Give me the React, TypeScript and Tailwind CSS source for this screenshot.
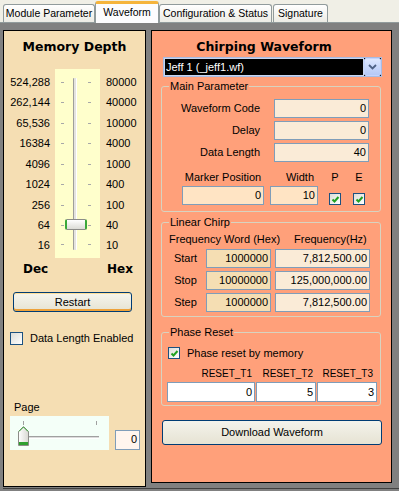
import React from 'react';

const depths: [string, string][] = [
  ['524,288', '80000'],
  ['262,144', '40000'],
  ['65,536', '10000'],
  ['16384', '4000'],
  ['4096', '1000'],
  ['1024', '400'],
  ['256', '100'],
  ['64', '40'],
  ['16', '10'],
];

const chirpRows = [
  { name: 'Start', hex: '1000000', hz: '7,812,500.00' },
  { name: 'Stop', hex: '10000000', hz: '125,000,000.00' },
  { name: 'Step', hex: '1000000', hz: '7,812,500.00' },
];

const Check = ({ checked, size }: { checked?: boolean; size: string }) => (
  <span className={`flex shrink-0 items-center justify-center border border-[#1c5180] bg-linear-to-br from-[#dcdcd7] to-white ${size}`}>
    {checked && (
      <svg width="9" height="9" viewBox="0 0 9 9">
        <path d="M1.5 4.5 L3.5 6.5 L7.5 2" fill="none" stroke="#21a121" strokeWidth="2" />
      </svg>
    )}
  </span>
);

const TextBox = ({ value, className }: { value: string; className: string }) => (
  <div className={`flex shrink-0 items-center justify-end border border-[#7f9db9] pr-[2px] ${className}`}>{value}</div>
);

const Group = ({ legend, className, children }: { legend: string; className: string; children: React.ReactNode }) => (
  <div className={`relative rounded-[3px] border border-[#d8d3c0] ${className}`}>
    <span className="absolute -top-[8px] left-[7px] bg-[#ffa07a] px-[1px] leading-[14px]">{legend}</span>
    {children}
  </div>
);

const App: React.FC = () => {
  return (
    <div className="flex h-[491px] w-[399px] flex-col bg-[#f0efe6] font-['Liberation_Sans',Arial,sans-serif] text-[11px] text-black">
      {/* tab strip */}
      <div className="flex h-[22px] items-end whitespace-nowrap pl-[3px] text-[10.5px]">
        <div className="flex h-[18px] w-[92px] items-center justify-center rounded-t-[3px] border border-b-0 border-[#919b9c] bg-linear-to-b from-white to-[#ecebe4]">
          Module Parameter
        </div>
        <div className="relative z-10 -mb-px flex h-[22px] w-[64px] items-center justify-center rounded-t-[3px] border border-b-0 border-[#919b9c] border-t-[3px] border-t-[#f5b43c] bg-[#fcfcfe] pb-[2px]">
          Waveform
        </div>
        <div className="flex h-[18px] w-[113px] items-center justify-center rounded-t-[3px] border border-b-0 border-[#919b9c] bg-linear-to-b from-white to-[#ecebe4]">
          Configuration &amp; Status
        </div>
        <div className="ml-[1px] flex h-[18px] w-[55px] items-center justify-center rounded-t-[3px] border border-b-0 border-[#919b9c] bg-linear-to-b from-white to-[#ecebe4]">
          Signature
        </div>
      </div>
      <div className="h-px bg-[#919b9c]" />

      {/* page */}
      <div className="flex flex-1 flex-col bg-[#808080] pl-[3px] pt-[7px]">
        <div className="flex items-start gap-[5px]">
          {/* Memory depth panel */}
          <div className="flex h-[457px] w-[143px] flex-col border border-black bg-[#f5deb3]">
            <div className="mt-[8px] text-center font-['DejaVu_Sans',sans-serif] text-[12.5px] font-bold leading-[16px]">
              Memory Depth
            </div>
            <div className="mt-[14px] flex h-[189px]">
              <div className="w-[51px] pr-[5px] pt-[2.75px] text-right">
                {depths.map(([dec], i) => (
                  <div key={dec} className={`flex items-center justify-end ${i < 8 ? 'h-[20.5px]' : 'h-[18px]'}`}>
                    {dec}
                  </div>
                ))}
              </div>
              <div className="relative w-[45px] bg-[#ffffcc] pt-[2.75px]">
                {depths.map(([dec], i) => (
                  <div key={dec} className={`flex items-center pl-[6px] ${i < 8 ? 'h-[20.5px]' : 'h-[18px]'}`}>
                    <span className="h-px w-[3px] bg-[#a8a8a8]" />
                    <span className="ml-[24px] h-px w-[3px] bg-[#a8a8a8]" />
                  </div>
                ))}
                <div className="absolute left-[18px] top-[9px] h-[172px] w-[4px] rounded-[1px] border-l border-l-[#a09f9a] border-r border-r-white bg-[#e4e3de]" />
                <div className="absolute left-[10px] top-[150px] h-[11px] w-[22px] rounded-[2px] border border-[#8c8c88] border-x-[2px] border-x-[#3aa83a] bg-linear-to-b from-white to-[#dcdcd6]" />
              </div>
              <div className="pl-[6px] pt-[2.75px]">
                {depths.map(([dec, hex], i) => (
                  <div key={dec} className={`flex items-center ${i < 8 ? 'h-[20.5px]' : 'h-[18px]'}`}>
                    {hex}
                  </div>
                ))}
              </div>
            </div>
            <div className="mt-[3px] flex h-[16px] items-center justify-between pl-[19px] pr-[12px] font-['DejaVu_Sans',sans-serif] text-[12px] font-bold">
              <span>Dec</span>
              <span>Hex</span>
            </div>
            <button className="ml-[9px] mt-[15px] flex h-[20px] w-[119px] items-center justify-center rounded-[3px] border border-[#003c74] bg-linear-to-b from-[#f6f5ee] to-[#e6e3d2] shadow-[inset_0_-2px_0_#eea23a,inset_0_1px_0_#ffdf9a]">
              Restart
            </button>
            <div className="ml-[6px] mt-[18px] flex items-center gap-[7px]">
              <Check size="h-[13px] w-[13px]" />
              <span>Data Length Enabled</span>
            </div>
            <div className="ml-[10px] mt-[53px] leading-[14px]">Page</div>
            <div className="ml-[6px] mt-[2px] flex items-end gap-[6px]">
              <div className="relative h-[34px] w-[99px] bg-[#f4fff8]">
                <span className="absolute left-[13px] top-[5px] h-[4px] w-px bg-[#a0a0a0]" />
                <span className="absolute left-[86px] top-[5px] h-[4px] w-px bg-[#a0a0a0]" />
                <span className="absolute left-[18px] top-[20px] h-[3px] w-[71px] border-t border-t-[#a0a0a0] border-b border-b-white bg-[#dcdcdc]" />
                <svg className="absolute left-[8px] top-[10px]" width="11" height="20" viewBox="0 0 11 20">
                  <defs>
                    <linearGradient id="pg" x1="0" y1="0" x2="1" y2="0">
                      <stop offset="0" stopColor="#ffffff" />
                      <stop offset="1" stopColor="#d8d8d2" />
                    </linearGradient>
                  </defs>
                  <polygon points="0.5,5.5 5.5,0.5 10.5,5.5 10.5,19.5 0.5,19.5" fill="url(#pg)" stroke="#8c8c88" />
                  <rect x="1" y="16" width="9" height="3" fill="#2fa02f" />
                  <path d="M1 5.5 L5.5 1 L10 5.5" fill="none" stroke="#3aa83a" />
                </svg>
              </div>
              <TextBox value="0" className="h-[20px] w-[25px] bg-[#fff5ee]" />
            </div>
          </div>

          {/* Chirping waveform panel */}
          <div className="flex h-[453px] w-[241px] flex-col border border-black bg-[#ffa07a]">
            <div className="mt-[8px] pr-[15px] text-center font-['DejaVu_Sans',sans-serif] text-[12.5px] font-bold leading-[16px]">
              Chirping Waveform
            </div>
            <div className="ml-[11px] mt-[2px] flex h-[20px] w-[219px] border border-[#a7bbe3] bg-black">
              <div className="flex flex-1 items-center border border-[#c8d6f0] pl-[1px] text-white">Jeff 1 (_jeff1.wf)</div>
              <div className="flex w-[17px] items-center justify-center rounded-[2px] border border-[#c3d3fd] bg-linear-to-b from-[#dde7fe] to-[#b4c8f6]">
                <svg width="9" height="6" viewBox="0 0 9 6">
                  <path d="M1 1 L4.5 4.5 L8 1" fill="none" stroke="#4d6185" strokeWidth="1.8" />
                </svg>
              </div>
            </div>

            <Group legend="Main Parameter" className="ml-[9px] mt-[9px] h-[126px] w-[220px]">
              <div className="mt-[12px] flex flex-col gap-[3px]">
                {[
                  ['Waveform Code', '0'],
                  ['Delay', '0'],
                  ['Data Length', '40'],
                ].map(([label, value]) => (
                  <div key={label} className="flex h-[19px] items-center">
                    <span className="w-[98px] text-right">{label}</span>
                    <TextBox value={value} className="ml-[14px] h-[19px] w-[95px] bg-[#faebd7]" />
                  </div>
                ))}
              </div>
              <div className="mt-[8px] flex h-[14px] items-center">
                <span className="ml-[20px] w-[82px] text-center">Marker Position</span>
                <span className="ml-[6px] w-[48px] pr-[4px] text-right">Width</span>
                <span className="ml-[11px] w-[12px] text-center">P</span>
                <span className="ml-[12px] w-[12px] text-center">E</span>
              </div>
              <div className="mt-[2px] flex h-[19px] items-end">
                <TextBox value="0" className="ml-[20px] h-[19px] w-[82px] bg-[#ffe4c4]" />
                <TextBox value="10" className="ml-[6px] h-[19px] w-[48px] bg-[#ffe4c4]" />
                <span className="ml-[11px]">
                  <Check checked size="h-[12px] w-[12px]" />
                </span>
                <span className="ml-[12px]">
                  <Check checked size="h-[12px] w-[12px]" />
                </span>
              </div>
            </Group>

            <Group legend="Linear Chirp" className="ml-[9px] mt-[10px] h-[95px] w-[220px]">
              <div className="mt-[9px] flex h-[14px] items-center">
                <span className="w-[132px] pl-[7px]">Frequency Word (Hex)</span>
                <span>Frequency(Hz)</span>
              </div>
              <div className="mt-[3px] flex flex-col gap-[3px]">
                {chirpRows.map((r) => (
                  <div key={r.name} className="flex h-[19px] items-center">
                    <span className="w-[44px] pl-[3px] text-center">{r.name}</span>
                    <TextBox value={r.hex} className="h-[19px] w-[65px] bg-[#f5deb3]" />
                    <TextBox value={r.hz} className="ml-[4px] h-[19px] w-[95px] bg-[#faebd7]" />
                  </div>
                ))}
              </div>
            </Group>

            <Group legend="Phase Reset" className="ml-[9px] mt-[15px] h-[74px] w-[220px]">
              <div className="ml-[6px] mt-[14px] flex h-[12px] items-center gap-[7px]">
                <Check checked size="h-[12px] w-[12px]" />
                <span>Phase reset by memory</span>
              </div>
              <div className="ml-[5px] mt-[7px] flex h-[14px] items-center text-[10px]">
                <span className="w-[88px] pr-[3px] text-right">RESET_T1</span>
                <span className="ml-[1px] w-[60px] pr-[3px] text-right">RESET_T2</span>
                <span className="ml-[1px] w-[60px] pr-[4px] text-right">RESET_T3</span>
              </div>
              <div className="ml-[5px] mt-[2px] flex gap-[1px]">
                <TextBox value="0" className="h-[20px] w-[88px] bg-white" />
                <TextBox value="5" className="h-[20px] w-[60px] bg-white" />
                <TextBox value="3" className="h-[20px] w-[60px] bg-white" />
              </div>
            </Group>

            <button className="ml-[10px] mt-[14px] flex h-[25px] w-[220px] items-center justify-center rounded-[3px] border border-[#003c74] bg-linear-to-b from-[#f4f3ec] to-[#e6e3d3]">
              Download Waveform
            </button>
          </div>
        </div>
        <div className="mt-[1px] h-px bg-[#404040]" />
      </div>
    </div>
  );
};

export default App;
